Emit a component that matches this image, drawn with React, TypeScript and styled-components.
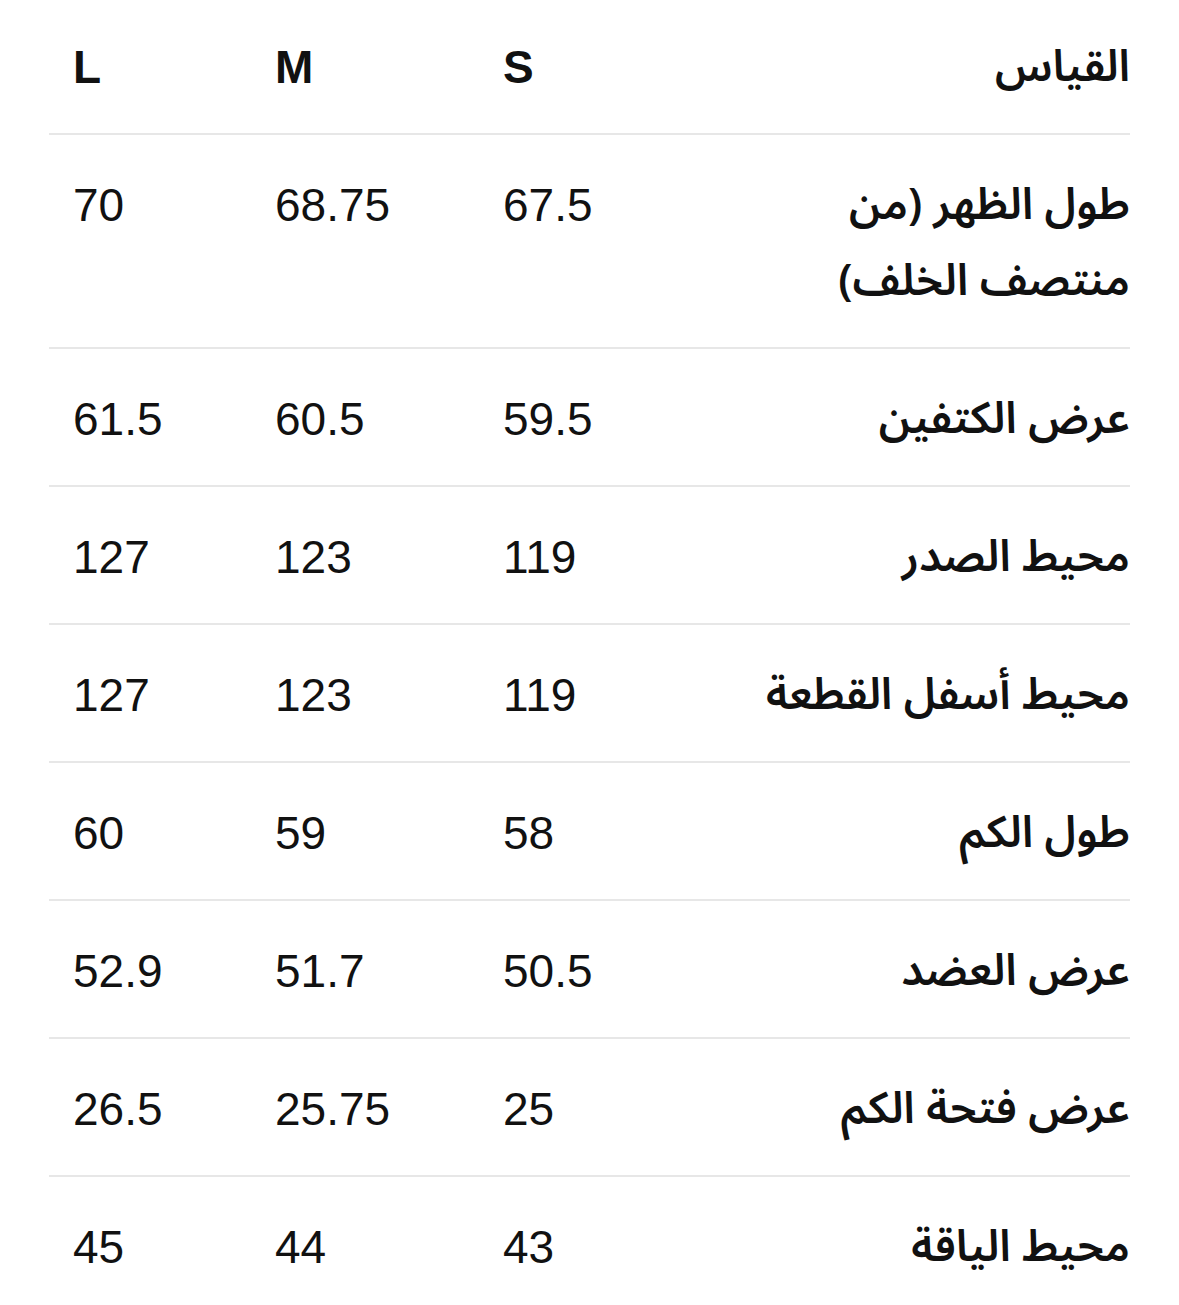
import React from 'react';
import styled, { createGlobalStyle } from 'styled-components';

const GlobalStyle = createGlobalStyle`
  html, body {
    margin: 0;
    padding: 0;
    background: #ffffff;
  }
  body {
    font-family: "Liberation Sans", "Noto Sans", "DejaVu Sans", sans-serif;
    color: #111111;
  }
`;

const Table = styled.div`
  margin: 0 49px;
  width: 1081px;
  display: grid;
  grid-template-columns: 202px 228px 1fr 391px;
`;

const Row = styled.div`
  display: contents;
`;

const Cell = styled.div<{ $head?: boolean; $last?: boolean }>`
  padding: ${({ $head }) => ($head ? '29px 0 28px 24px' : '32px 0 28px 24px')};
  border-bottom: ${({ $last }) => ($last ? 'none' : '2px solid #e7e7e7')};
  font-size: 46px;
  line-height: 76px;
  font-weight: ${({ $head }) => ($head ? 700 : 400)};
`;

const LabelCell = styled(Cell)`
  direction: rtl;
  text-align: right;
  padding-left: 0;
  padding-right: 0;
  font-family: "Noto Sans Arabic", "DejaVu Sans", sans-serif;
  font-weight: 600;
  font-size: 44px;
`;

const LabelText = styled.span`
  display: inline-block;
  max-width: 300px;
`;

type SizeRow = {
  label: string,
  s: string,
  m: string,
  l: string,
};

const rows: SizeRow[] = [
  { label: 'طول الظهر (من منتصف الخلف)', s: '67.5', m: '68.75', l: '70' },
  { label: 'عرض الكتفين', s: '59.5', m: '60.5', l: '61.5' },
  { label: 'محيط الصدر', s: '119', m: '123', l: '127' },
  { label: 'محيط أسفل القطعة', s: '119', m: '123', l: '127' },
  { label: 'طول الكم', s: '58', m: '59', l: '60' },
  { label: 'عرض العضد', s: '50.5', m: '51.7', l: '52.9' },
  { label: 'عرض فتحة الكم', s: '25', m: '25.75', l: '26.5' },
  { label: 'محيط الياقة', s: '43', m: '44', l: '45' },
];

const App = () => (
  <>
    <GlobalStyle />
    <Table>
      <Row>
        <Cell $head>L</Cell>
        <Cell $head>M</Cell>
        <Cell $head>S</Cell>
        <LabelCell $head>القياس</LabelCell>
      </Row>
      {rows.map(({ label, s, m, l }, i) => {
        const last = i === rows.length - 1;
        return (
          <Row key={label}>
            <Cell $last={last}>{l}</Cell>
            <Cell $last={last}>{m}</Cell>
            <Cell $last={last}>{s}</Cell>
            <LabelCell $last={last}>
              {label.length > 20 ? <LabelText>{label}</LabelText> : label}
            </LabelCell>
          </Row>
        );
      })}
    </Table>
  </>
);

export default App;
